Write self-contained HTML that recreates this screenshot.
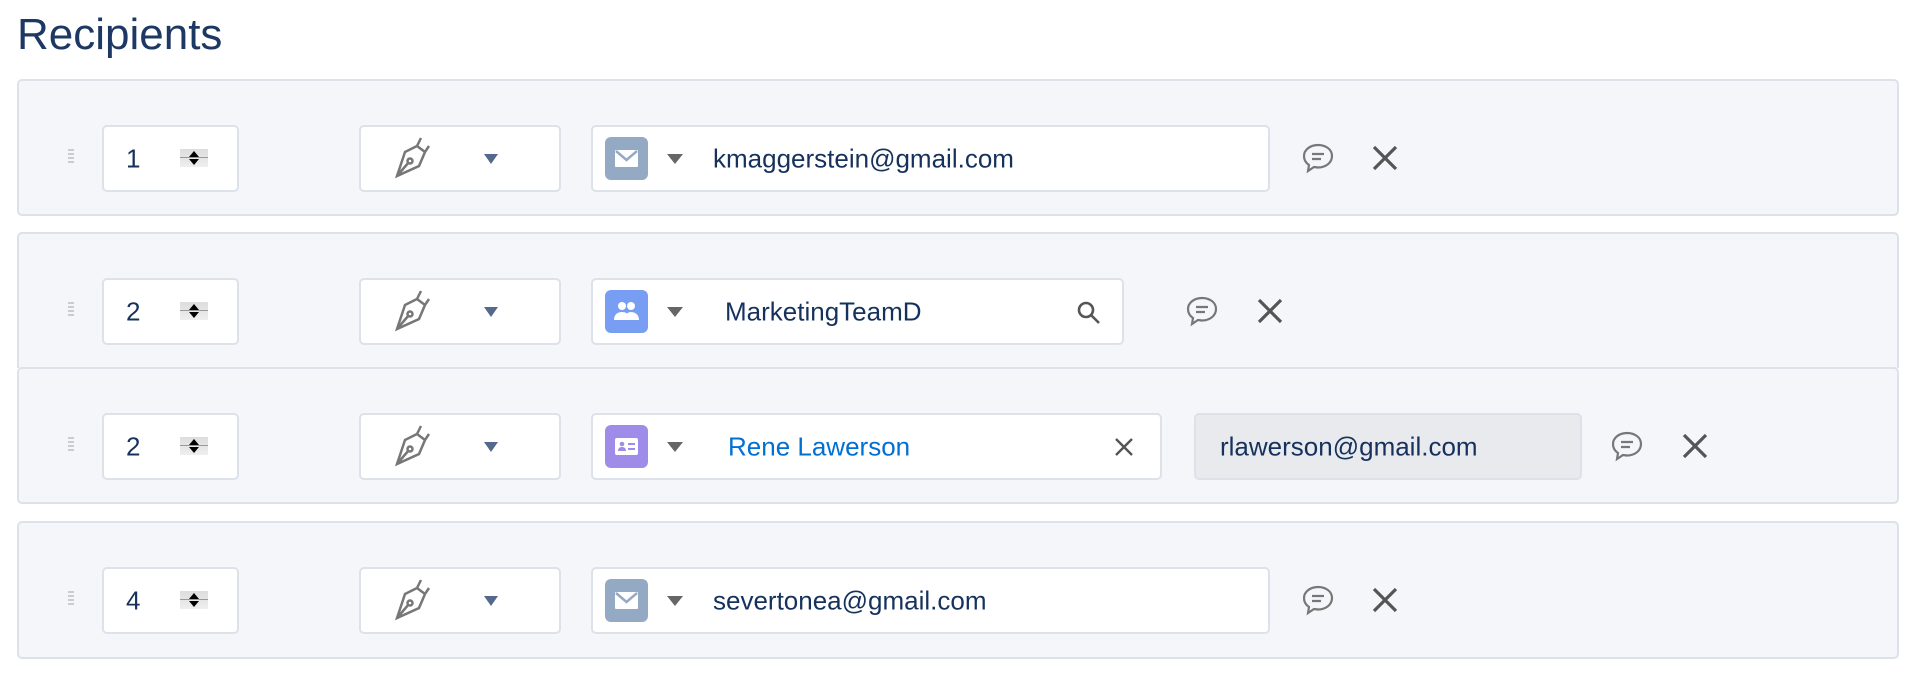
<!DOCTYPE html>
<html><head><meta charset="utf-8"><style>
body{margin:0;width:1920px;height:673px;background:#fff;font-family:"Liberation Sans",sans-serif;position:relative;overflow:hidden}
.a{position:absolute}
h1{position:absolute;left:17px;top:10px;margin:0;font-weight:normal;font-size:44px;color:#1d3862;letter-spacing:0px}
.row{position:absolute;left:17px;width:1882px;background:#f4f6f9;border:2px solid #dde1ea;border-radius:5px;box-sizing:border-box}
.box{position:absolute;background:#fff;border:2px solid #dde1ea;border-radius:5px;box-sizing:border-box;height:67px}
.txt{position:absolute;font-size:26px;color:#16325c;top:50%;transform:translateY(-50%);white-space:nowrap}
.drag{position:absolute;left:68px;width:6px;height:14px;background:repeating-linear-gradient(#ccc 0 2px,transparent 2px 4px)}
.spin{position:absolute;left:76px;top:22px;width:28px;height:18px;background:linear-gradient(#ddd,#eee)}
.caret{position:absolute;width:0;height:0;border-left:8px solid transparent;border-right:8px solid transparent;border-top:10px solid #666}
.ic{position:absolute;left:12px;top:10px;width:43px;height:43px;border-radius:6px}
</style></head><body>
<h1>Recipients</h1>

<div class="row" style="top:79px;height:137px"></div>
<div class="row" style="top:232px;height:136px;border-bottom:none;border-radius:5px 5px 0 0"></div>
<div class="row" style="top:367px;height:137px"></div>
<div class="row" style="top:521px;height:138px"></div>

<script>
const rows=[{y:125,t:'1',f:'mail',w:679,txt:'kmaggerstein@gmail.com',cx:1318,xx:1385},
{y:278,t:'2',f:'group',w:533,txt:'MarketingTeamD',cx:1202,xx:1270,search:1},
{y:413,t:'2',f:'contact',w:571,txt:'Rene Lawerson',cx:1627,xx:1695,blue:1,clear:1},
{y:567,t:'4',f:'mail',w:679,txt:'severtonea@gmail.com',cx:1318,xx:1385}];
let h='';
const pen='<svg width="44" height="46" viewBox="0 0 44 46" fill="none" stroke="#777" stroke-width="2.5"><path d="M30 4l-4 8M26 12l8 6 4-6M26 12l-12 6-8 24 22-10 6-14z"/><path d="M6 42l12-14"/><circle cx="19" cy="27" r="2.5"/></svg>';
const icons={mail:['#94a9c3','<svg width="43" height="43" viewBox="0 0 43 43"><rect x="10" y="13" width="23" height="17" rx="1" fill="#fff"/><path d="M11 14l10.5 9 10.5-9" stroke="#94a9c3" stroke-width="2.5" fill="none"/></svg>'],
group:['#779ef2','<svg width="43" height="43" viewBox="0 0 43 43" fill="#fff"><circle cx="17" cy="16" r="4"/><circle cx="26" cy="16" r="4"/><path d="M9 30c0-6 4-8 8-8s8 2 8 8zM20 30c0-6 3-8 6-8s8 2 8 8z"/></svg>'],
contact:['#9f8be8','<svg width="43" height="43" viewBox="0 0 43 43"><rect x="10" y="13" width="23" height="17" rx="2" fill="#fff"/><circle cx="17" cy="19" r="2.3" fill="#9f8be8"/><path d="M13 26c0-3 2-4 4-4s4 1 4 4z" fill="#9f8be8"/><rect x="23" y="18" width="7" height="2" fill="#9f8be8"/><rect x="23" y="23" width="7" height="2" fill="#9f8be8"/></svg>']};
const chat='<svg width="36" height="36" viewBox="0 0 36 36" fill="none" stroke="#777" stroke-width="2.2"><path d="M18 5C10 5 4 10 4 16c0 4 2 7 5 9l-1 6 6-4c1 0 3 .5 4 .5 8 0 14-5 14-11.5S26 5 18 5z"/><path d="M12 14h12M12 19h9"/></svg>';
const X='<svg width="30" height="30" viewBox="0 0 30 30" stroke="#555" stroke-width="3.2"><path d="M4 4l22 22M26 4L4 26"/></svg>';
for(const r of rows){
 const c=r.y+33;
 h+=`<div class="drag" style="top:${c-9}px"></div>`;
 h+=`<div class="box" style="left:102px;top:${r.y}px;width:137px"><div class="txt" style="left:22px">${r.t}</div><div class="spin"><div style="position:absolute;left:9px;top:2px;border-left:5px solid transparent;border-right:5px solid transparent;border-bottom:6px solid #000"></div><div style="position:absolute;left:0;top:8px;width:28px;height:1px;background:#999"></div><div style="position:absolute;left:9px;top:10px;border-left:5px solid transparent;border-right:5px solid transparent;border-top:6px solid #000"></div></div></div>`;
 h+=`<div class="box" style="left:359px;top:${r.y}px;width:202px"><div class="a" style="left:30px;top:7px">${pen}</div><div class="caret" style="left:123px;top:27px;border-top-color:#54698d;border-width:10px 7px 0 7px"></div></div>`;
 h+=`<div class="box" style="left:591px;top:${r.y}px;width:${r.w}px"><div class="ic" style="background:${icons[r.f][0]}">${icons[r.f][1]}</div><div class="caret" style="left:74px;top:27px"></div><div class="txt" style="left:${r.f=='mail'?120:r.f=='group'?132:135}px;color:${r.blue?'#0070d2':'#16325c'}">${r.txt}</div>`+
 (r.search?`<svg class="a" style="right:20px;top:20px" width="26" height="26" viewBox="0 0 26 26" fill="none" stroke="#555" stroke-width="2.6"><circle cx="10" cy="10" r="7"/><path d="M15 15l8 8"/></svg>`:'')+
 (r.clear?`<svg class="a" style="right:26px;top:22px" width="20" height="20" viewBox="0 0 20 20" stroke="#555" stroke-width="2.4"><path d="M2 2l16 16M18 2L2 18"/></svg>`:'')+`</div>`;
 if(r.clear) h+=`<div class="box" style="left:1194px;top:${r.y}px;width:388px;background:#e8eaee"><div class="txt" style="left:24px">rlawerson@gmail.com</div></div>`;
 h+=`<div class="a" style="left:${r.cx-18}px;top:${c-18}px">${chat}</div><div class="a" style="left:${r.xx-15}px;top:${c-15}px">${X}</div>`;
}
document.write(h);
</script>
</body></html>
